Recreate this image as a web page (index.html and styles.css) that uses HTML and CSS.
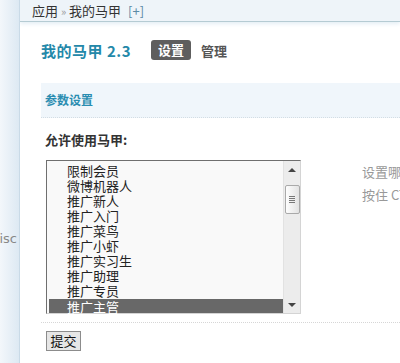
FILE: index.html
```html
<!DOCTYPE html>
<html lang="zh-CN">

<head>
    <meta charset="UTF-8">
    <title>我的马甲 2.3</title>
    <link rel="stylesheet" href="styles.css">
</head>

<body>
    <div class="side">
        <span class="side-label">Disc</span>
    </div>

    <div class="main">
        <div class="crumb">应用 <span class="sep">»</span> 我的马甲 <span class="add">[+]</span></div>

        <div class="content">
            <div class="head">
                <h1 class="title">我的马甲 2.3</h1>
                <span class="tab active">设置</span>
                <span class="tab">管理</span>
            </div>

            <div class="section">参数设置</div>

            <div class="label">允许使用马甲:</div>

            <div class="row">
                <div class="listbox">
                    <ul class="items">
                        <li>限制会员</li>
                        <li>微博机器人</li>
                        <li>推广新人</li>
                        <li>推广入门</li>
                        <li>推广菜鸟</li>
                        <li>推广小虾</li>
                        <li>推广实习生</li>
                        <li>推广助理</li>
                        <li>推广专员</li>
                        <li class="selected">推广主管</li>
                    </ul>
                    <div class="scrollbar">
                        <span class="arrow up"></span>
                        <span class="thumb"><i></i><i></i><i></i><i></i></span>
                        <span class="arrow down"></span>
                    </div>
                </div>
                <div class="tip">
                    <p>设置哪些用户组可以使用马甲</p>
                    <p>按住 CTRL 可多选</p>
                </div>
            </div>

            <div class="actions">
                <button class="submit">提交</button>
            </div>
        </div>
    </div>
</body>

</html>
```

FILE: styles.css
```css
body {
    margin: 0;
    height: 363px;
    overflow: hidden;
    display: flex;
    background: #fff;
    font-family: "Noto Sans CJK SC", "DejaVu Sans", sans-serif;
    font-size: 12px;
    color: #333;
}

.side {
    width: 19px;
    flex: none;
    border-right: 1px solid #c9dae7;
    background: linear-gradient(to right, #f3f7fb, #dde9f3);
    display: flex;
    justify-content: flex-end;
    align-items: flex-start;
    overflow: hidden;
}

.side-label {
    margin-top: 231px;
    margin-right: 2px;
    color: #888;
    font-family: "DejaVu Sans", sans-serif;
    font-size: 13px;
    white-space: nowrap;
}

.main {
    flex: 1;
    min-width: 0;
    overflow: hidden;
}

.crumb {
    height: 21px;
    line-height: 21px;
    padding-left: 12px;
    background: #eef4f9;
    border-bottom: 1px solid #b5cbd3;
    box-shadow: 0 2px 4px #e4eef5;
    white-space: nowrap;
    font-size: 13px;
}

.crumb .sep {
    color: #999;
    font-size: 11px;
}

.crumb .add {
    margin-left: 4px;
    color: #5a8aa6;
}

.content {
    padding-left: 21px;
}

.head {
    display: flex;
    align-items: center;
    height: 20px;
    margin-top: 18px;
}

.title {
    margin: 0;
    font-size: 15px;
    font-weight: bold;
    letter-spacing: 0.5px;
    color: #2388a9;
    white-space: nowrap;
}

.tab {
    font-size: 13px;
    font-weight: bold;
    color: #555;
    margin-left: 10px;
    white-space: nowrap;
}

.tab.active {
    margin-left: 20px;
    height: 20px;
    line-height: 20px;
    padding: 0 7px;
    border-radius: 3px;
    background: #5e5e5e;
    color: #fff;
}

.section {
    margin-top: 23px;
    height: 34px;
    line-height: 34px;
    padding-left: 4px;
    background: #f0f6fb;
    border-bottom: 1px dotted #d3dde4;
    font-weight: bold;
    color: #2a8db1;
}

.label {
    margin-top: 13px;
    padding-left: 4px;
    font-size: 13px;
    font-weight: bold;
    color: #333;
    line-height: 18px;
}

.row {
    display: flex;
    margin-top: 11px;
    padding-left: 5px;
}

.listbox {
    width: 253px;
    height: 152px;
    flex: none;
    display: flex;
    border: 1px solid #d4d4d4;
    border-top-color: #6f6f6f;
    border-left-color: #6f6f6f;
    background: #f9f9f9;
}

.items {
    flex: 1;
    margin: 0;
    padding: 2px 0 0 2px;
    list-style: none;
    font-size: 13px;
    color: #222;
}

.items li {
    height: 15px;
    line-height: 15px;
    padding-left: 18px;
}

.items li.selected {
    height: 14px;
    margin-top: 1px;
    background: #686868;
    color: #fff;
}

.scrollbar {
    width: 16px;
    flex: none;
    display: flex;
    flex-direction: column;
    align-items: center;
    background: #ececec;
    border-left: 1px solid #e2e2e2;
}

.arrow {
    width: 0;
    height: 0;
    border-left: 4px solid transparent;
    border-right: 4px solid transparent;
}

.arrow.up {
    margin-top: 7px;
    border-bottom: 4px solid #444;
}

.arrow.down {
    margin-top: auto;
    margin-bottom: 6px;
    border-top: 4px solid #444;
}

.thumb {
    margin-top: 13px;
    width: 13px;
    height: 27px;
    border: 1px solid #a9a9a9;
    border-radius: 2px;
    background: linear-gradient(to right, #fdfdfd, #e2e2e2);
    display: flex;
    flex-direction: column;
    align-items: center;
    justify-content: center;
    gap: 1px;
}

.thumb i {
    width: 6px;
    height: 1px;
    background: #777;
}

.tip {
    flex: none;
    margin-left: 61px;
    color: #999;
    white-space: nowrap;
    font-size: 13px;
}

.tip p {
    margin: 1px 0 0;
    line-height: 22px;
}

.actions {
    margin-top: 8px;
    border-top: 1px dotted #d6d6d6;
    padding: 8px 0 0 5px;
}

.submit {
    height: 20px;
    width: 35px;
    padding: 0;
    font-family: "Noto Sans CJK SC", sans-serif;
    font-size: 13px;
    line-height: 18px;
    color: #111;
    background: #e6e6e6;
    border: 1px solid #8c8c8c;
    border-radius: 0;
}
```
